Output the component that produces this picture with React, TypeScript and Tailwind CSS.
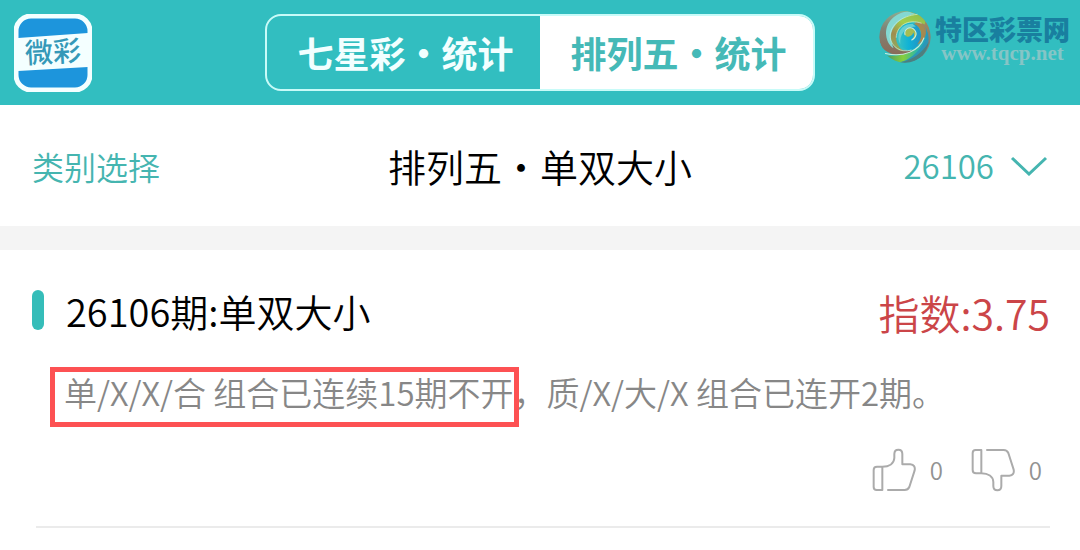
import React, { useState } from 'react';
import clsx from 'clsx';

const tabs = ['七星彩・统计', '排列五・统计'];

const AppLogo = () => (
  <svg viewBox="0 0 78 78" className="ml-1 h-[78px] w-[78px]" role="img" aria-label="微彩">
    <rect x="2" y="2" width="74" height="74" rx="15" fill="#1d95dc" stroke="#f4ffff" strokeWidth="5" />
    <path d="M4 24 L74 19 V53 L4 57 Z" fill="#f4ffff" />
    <text
      x="39"
      y="48"
      textAnchor="middle"
      fontSize="28"
      fontWeight="500"
      fill="#3599b8"
      fontFamily="'Noto Sans CJK SC', sans-serif"
      transform="rotate(-3 39 39)"
    >
      微彩
    </text>
  </svg>
);

const SwirlLogo = () => (
  <svg viewBox="9 12 154 154" className="h-[52px] w-[52px]" aria-hidden="true">
    <defs>
      <linearGradient id="rim" x1="0.5" y1="0" x2="0.5" y2="1">
        <stop offset="0" stopColor="#8fae92" />
        <stop offset="0.4" stopColor="#7f8577" />
        <stop offset="1" stopColor="#8a6a58" />
      </linearGradient>
      <linearGradient id="lime" x1="0.8" y1="0" x2="0.2" y2="1">
        <stop offset="0" stopColor="#8fc04e" />
        <stop offset="0.35" stopColor="#a3cf4c" />
        <stop offset="0.7" stopColor="#a08c4e" />
        <stop offset="1" stopColor="#8fae60" />
      </linearGradient>
      <linearGradient id="amber" x1="0" y1="0" x2="0.6" y2="1">
        <stop offset="0" stopColor="#9cc850" />
        <stop offset="0.5" stopColor="#a3895a" />
        <stop offset="1" stopColor="#7b807a" />
      </linearGradient>
      <linearGradient id="tail" x1="0" y1="0" x2="1" y2="0">
        <stop offset="0" stopColor="#3f8f6c" />
        <stop offset="0.45" stopColor="#86cf3c" />
        <stop offset="0.75" stopColor="#2fb8a4" />
        <stop offset="1" stopColor="#1c9fc6" />
      </linearGradient>
      <linearGradient id="sea" x1="0" y1="0.5" x2="1" y2="0.5">
        <stop offset="0" stopColor="#3cc3c0" />
        <stop offset="0.5" stopColor="#10b2d6" />
        <stop offset="1" stopColor="#2492c4" />
      </linearGradient>
      <clipPath id="ball">
        <circle cx="86" cy="89" r="76" />
      </clipPath>
    </defs>
    <g clipPath="url(#ball)">
      {/* right rim */}
      <path d="M70 12 C120 4 168 44 163 96 C160 126 142 148 126 152 C148 116 150 70 112 42 C96 30 80 32 62 44 Z" fill="url(#amber)" />
      {/* left crescent */}
      <path d="M84 10 C40 10 6 46 9 92 C12 124 34 140 66 142 C88 142 102 136 112 128 C76 136 42 116 38 84 C36 56 56 28 96 14 Z" fill="url(#rim)" />
      <path d="M94 13 C56 18 28 46 30 82 C32 102 40 114 52 122 C40 96 48 66 70 46 C88 30 104 24 122 22 Z" fill="#84d8d2" />
      {/* green band */}
      <path d="M128 20 C88 20 46 50 44 88 C44 112 60 130 84 132 C62 118 54 94 64 74 C78 46 114 34 144 52 C150 40 142 28 128 20 Z" fill="url(#lime)" />
      {/* blue band */}
      <path d="M122 54 C92 38 62 58 62 90 C66 118 88 132 108 126 C134 114 142 82 122 54 Z" fill="url(#sea)" />
      <path d="M108 50 C72 50 58 84 72 110 C70 82 84 60 118 58 Z" fill="#66cfd2" />
      <path d="M112 50 C136 60 142 88 122 112 C148 100 152 72 138 56 C130 46 118 46 112 50 Z" fill="#a58a50" />
      {/* centre hook */}
      <path d="M86 82 C84 66 98 58 110 64 C126 74 122 92 106 98 C112 90 116 82 110 76 C110 86 92 94 86 82 Z" fill="#a4bd54" />
      {/* bottom tail */}
      <path d="M20 142 C74 152 120 136 144 92 C150 78 150 68 146 58 C160 84 156 126 130 146 C98 172 50 170 20 142 Z" fill="url(#tail)" />
      <path d="M126 128 C144 110 152 90 150 70 C164 98 152 132 126 148 C112 160 92 166 72 164 C96 156 112 144 126 128 Z" fill="#2a98b8" />
      <path d="M70 164 C106 160 138 136 156 104 C152 138 122 168 84 168 Z" fill="#4c7f80" />
    </g>
    <g fill="none" stroke="#cdeedd" strokeLinecap="round">
      <path d="M28 138 C80 150 128 132 142 92" strokeWidth="3" />
      <path d="M122 22 C76 26 40 54 42 90 C46 120 74 136 104 128" strokeWidth="2" />
      <path d="M134 48 C96 34 60 56 60 90" strokeWidth="2" />
      <path d="M86 82 C82 66 98 58 110 64 C124 74 120 90 106 98" strokeWidth="3" />
    </g>
  </svg>
);

const ThumbIcon = ({ down = false }: { down?: boolean }) => (
  <svg
    viewBox="0 0 132 132"
    className={clsx('h-11 w-11', down && '-scale-y-100')}
    fill="none"
    stroke="#ababab"
    strokeWidth="6"
    strokeLinecap="round"
    strokeLinejoin="round"
    aria-hidden="true"
  >
    <path d="M31 56 V126 H14 Q5 126 5 117 V66 Q5 56 15 56 H31 C52 56 66 46 67 30 V18 Q67 5 79 5 Q91 5 91 18 V49 H115 Q131 51 128 67 L112 117 Q108 126 98 126 H48" />
  </svg>
);

const App: React.FC = () => {
  const [activeTab, setActiveTab] = useState(1);
  const [votes, setVotes] = useState({ up: 0, down: 0 });

  return (
    <div
      lang="zh-CN"
      className="min-h-screen bg-white font-['Noto_Sans_CJK_SC',sans-serif] font-[350] text-black"
    >
      {/* Top bar */}
      <header className="grid h-[105px] grid-cols-[1fr_auto_1fr] items-center bg-[#32bec0] px-2.5">
        <AppLogo />
        <nav className="flex h-[77px] w-[550px] overflow-hidden rounded-2xl border-2 border-[#c8fbf8]">
          {tabs.map((tab, i) => (
            <button
              key={tab}
              type="button"
              onClick={() => setActiveTab(i)}
              className={clsx(
                'flex-1 pb-0.5 pl-1 text-4xl font-bold',
                activeTab === i ? 'bg-white text-[#45b9b7]' : 'text-[#f2ffff]'
              )}
            >
              {tab}
            </button>
          ))}
        </nav>
        <div className="mb-8 flex items-center justify-end gap-1">
          <SwirlLogo />
          <div className="flex flex-col items-center pt-1">
            <span className="text-[27px] leading-7 font-black text-[#197f9f]">特区彩票网</span>
            <span className="font-['Liberation_Serif',serif] text-[21px] leading-5 font-bold text-[#86c5c6]">
              www.tqcp.net
            </span>
          </div>
        </div>
      </header>

      {/* Filter row */}
      <div className="grid h-[121px] grid-cols-[1fr_auto_1fr] items-center px-8">
        <button type="button" className="justify-self-start text-[32px] text-[#45b5b0]">
          类别选择
        </button>
        <h1 className="text-[38px]">排列五・单双大小</h1>
        <button
          type="button"
          className="flex items-center gap-4 justify-self-end text-[33px] text-[#45b5b0]"
        >
          26106
          <svg viewBox="0 0 38 20" className="h-5 w-[38px]" fill="none" stroke="currentColor" strokeWidth="3" aria-hidden="true">
            <path d="M2 2 L19 18 L36 2" />
          </svg>
        </button>
      </div>

      <div className="h-6 bg-[#f4f4f4]" />

      {/* Statistic entry */}
      <article className="pt-7 pr-[30px] pl-8">
        <div className="flex h-16 items-center">
          <span className="h-10 w-3 rounded-full bg-[#35bdb9]" />
          <h2 className="ml-[22px] text-[38px]">26106期:单双大小</h2>
          <span className="ml-auto pt-1.5 text-[41px] text-[#cb4548]">指数:3.75</span>
        </div>
        <p className="mt-[26px] pl-8 text-[33px] leading-12 text-[#878787]">
          <span className="relative inline-block">
            单/X/X/合 组合已连续15期不开
            <span className="absolute -top-px right-[-5px] bottom-[-11px] left-[-14px] border-5 border-[#fd5153]" />
          </span>
          ，质/X/大/X 组合已连开2期。
        </p>
        <div className="mt-8 flex h-11 items-center justify-end gap-7 pr-2 text-2xl text-[#929292]">
          <button
            type="button"
            aria-label="赞"
            onClick={() => setVotes({ ...votes, up: votes.up + 1 })}
            className="flex items-center gap-3.5"
          >
            <ThumbIcon />
            {votes.up}
          </button>
          <button
            type="button"
            aria-label="踩"
            onClick={() => setVotes({ ...votes, down: votes.down + 1 })}
            className="flex items-center gap-3.5"
          >
            <ThumbIcon down />
            {votes.down}
          </button>
        </div>
        <hr className="mt-[34px] ml-1 border-t-2 border-[#ebebeb]" />
      </article>
    </div>
  );
};

export default App;
